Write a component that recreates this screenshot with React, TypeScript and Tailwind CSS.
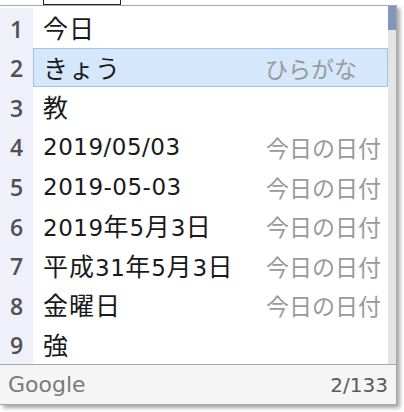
import React from "react";

type Row = { n: number; text: string; note?: string };

const rows: Row[] = [
  { n: 1, text: "今日" },
  { n: 2, text: "きょう", note: "ひらがな" },
  { n: 3, text: "教" },
  { n: 4, text: "2019/05/03", note: "今日の日付" },
  { n: 5, text: "2019-05-03", note: "今日の日付" },
  { n: 6, text: "2019年5月3日", note: "今日の日付" },
  { n: 7, text: "平成31年5月3日", note: "今日の日付" },
  { n: 8, text: "金曜日", note: "今日の日付" },
  { n: 9, text: "強" },
];

const SELECTED = 2;

// kana / kanji runs are set a little larger than the latin digits, like Meiryo
function Mixed({ text }: { text: string }) {
  const parts = text.split(/([\u3040-\u30ff\u4e00-\u9fff]+)/).filter(Boolean);
  return (
    <>
      {parts.map((p, i) =>
        /[\u3040-\u30ff\u4e00-\u9fff]/.test(p) ? (
          <span key={i} className="text-[25px] font-['Noto_Sans_CJK_JP',sans-serif] tracking-[1px]">
            {p}
          </span>
        ) : (
          <span key={i}>{p}</span>
        )
      )}
    </>
  );
}

export default function App() {
  return (
    <div className="w-[404px] h-[412px] bg-white font-['DejaVu_Sans','Noto_Sans_CJK_JP',sans-serif]">
      {/* composition box peeking above the window */}
      <div className="h-[5px]">
        <div className="ml-[43px] w-[78px] h-[5px] border-x border-b border-[#222]" />
      </div>

      <div className="w-[397px] border-t border-r border-b border-[#a8a8a8] shadow-[3px_3px_4px_rgba(0,0,0,0.35)]">
        <div className="flex">
          <div className="flex-1 pt-[2px]">
            {rows.map((r) => {
              const sel = r.n === SELECTED;
              return (
                <div key={r.n} className="flex h-[39.6px]">
                  <div className="w-[33px] shrink-0 bg-[#eff0fa] flex items-center justify-center pt-[2px] font-['Open_Sans',sans-serif] font-semibold text-[23px] text-[#505050]">
                    {r.n}
                  </div>
                  <div
                    className={
                      sel
                        ? "flex-1 flex items-center bg-[#d4e7fb] border border-[#9fc3ea] pl-[9px] pt-[2px]"
                        : "flex-1 flex items-center pl-[10px] pt-[2px]"
                    }
                  >
                    <span className="flex-1 text-[23px] leading-none tracking-[0.5px] text-[#1a1a1a] whitespace-nowrap">
                      <Mixed text={r.text} />
                    </span>
                    <span className="w-[122px] shrink-0 text-[23px] leading-none text-[#9a9a9a] font-['Noto_Sans_CJK_JP',sans-serif] whitespace-nowrap">
                      {r.note}
                    </span>
                  </div>
                </div>
              );
            })}
          </div>
          {/* scrollbar */}
          <div className="w-[8px] bg-[#e4e4e4] flex flex-col">
            <div className="h-[24px] bg-[#8196b9]" />
          </div>
        </div>
        <div className="h-[40px] border-t border-[#a8a8a8] bg-[#f5f5f5] flex items-center justify-between pl-[8px] pr-[8px]">
          <span className="text-[22px] text-[#7a7a7a]">Google</span>
          <span className="text-[20px] text-[#5a5a5a]">2/133</span>
        </div>
      </div>
    </div>
  );
}
